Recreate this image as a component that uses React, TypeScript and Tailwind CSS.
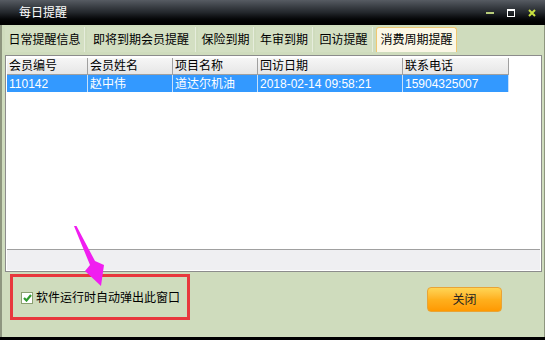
const TABS = [
  { label: "日常提醒信息", w: "w-[80px]" },
  { label: "即将到期会员提醒", w: "w-[109px]" },
  { label: "保险到期", w: "w-[56px]" },
  { label: "年审到期", w: "w-[57px]" },
  { label: "回访提醒", w: "w-[58px]" },
  { label: "消费周期提醒", w: "w-[81px]", active: true },
];

const COLS = [
  { label: "会员编号", w: "w-[81px]" },
  { label: "会员姓名", w: "w-[85px]" },
  { label: "项目名称", w: "w-[85px]" },
  { label: "回访日期", w: "w-[145px]" },
  { label: "联系电话", w: "w-[106px]" },
];

const ROWS = [["110142", "赵中伟", "道达尔机油", "2018-02-14 09:58:21", "15904325007"]];

export default function App() {
  return (
    <div
      className="relative w-[545px] h-[340px] overflow-hidden flex flex-col text-[12px] text-black bg-[#cfdcbd]"
      style={{ fontFamily: '"Liberation Sans", "Noto Sans CJK SC", sans-serif' }}
    >
      {/* title bar */}
      <div className="h-[25px] shrink-0 flex items-center justify-between pl-[19px] pr-[9px] bg-gradient-to-b from-[#575c63] via-[#23272c] to-[#000000]">
        <span className="text-white text-[12px] leading-none">每日提醒</span>
        <div className="flex items-center gap-[13px]">
          <div className="w-[8px] h-[2px] bg-[#b8cc7a]" />
          <div className="w-[8px] h-[8px] border border-white border-t-2" />
          <svg width="8" height="8" viewBox="0 0 8 8">
            <path d="M1 1 L7 7 M7 1 L1 7" stroke="#c8e040" strokeWidth="2" />
          </svg>
        </div>
      </div>

      {/* body */}
      <div className="flex-1 flex flex-col border-l-2 border-l-[#8e967f] border-r border-r-[#8e967f]">
        {/* tabs */}
        <div className="h-[25px] mt-[2px] ml-[3px] flex gap-[2px]">
          {TABS.map((t) => (
            <div
              key={t.label}
              className={`${t.w} h-full flex items-center justify-center ${
                t.active
                  ? "bg-[#fbf7e6] border border-b-0 border-[#f0c870] rounded-t-[3px] ml-[1px]"
                  : "bg-[#d3dfc2] border-r border-r-[#e6eddc]"
              }`}
            >
              {t.label}
            </div>
          ))}
        </div>

        {/* grid */}
        <div className="mt-[3px] ml-[3px] mr-[2px] h-[217px] border border-[#8c8c8c] bg-white flex flex-col p-px">
          <div className="flex-1 flex flex-col">
            <div className="flex h-[17px] mt-px">
              {COLS.map((c) => (
                <div
                  key={c.label}
                  className={`${c.w} h-full flex items-center pl-[2px] border-r border-b border-[#a0a0a0] bg-gradient-to-b from-[#f6f6f6] to-[#e6e6e6]`}
                >
                  {c.label}
                </div>
              ))}
            </div>
            {ROWS.map((r) => (
              <div key={r[0]} className="flex h-[17px]">
                {r.map((v, i) => (
                  <div
                    key={i}
                    className={`${COLS[i].w} h-full flex items-center pl-[2px] bg-[#3399ff] text-white border-r border-[#c7e0fa]`}
                  >
                    {v}
                  </div>
                ))}
              </div>
            ))}
          </div>
          <div className="h-[21px] border-t border-[#a0a0a0] bg-[#efeff2]" />
        </div>

        {/* bottom */}
        <div className="flex-1 flex items-start justify-between">
          <div className="mt-[2px] ml-[8px] w-[180px] h-[46px] border-[3px] border-[#e8383d] flex items-center pl-[8px] pt-[1px]">
            <div className="w-[12px] h-[12px] border border-[#8aa070] bg-white flex items-center justify-center">
              <svg width="9" height="8" viewBox="0 0 9 8">
                <path d="M1 4 L3.5 6.5 L8 1" stroke="#2f9a2f" strokeWidth="2.2" fill="none" />
              </svg>
            </div>
            <span className="ml-[3px]">软件运行时自动弹出此窗口</span>
          </div>
          <button className="mt-[15px] mr-[42px] w-[75px] h-[25px] rounded-[4px] border border-[#e8a436] bg-gradient-to-b from-[#ffd553] via-[#ffb01c] to-[#ff9900] text-[#222] text-[12px] flex items-center justify-center">
            关闭
          </button>
        </div>
      </div>
      <div className="h-[3px] bg-black shrink-0" />

      {/* annotation arrow */}
      <svg className="absolute left-0 top-0 pointer-events-none" width="545" height="340">
        <polygon
          points="74,226 76.5,226 95,261 104,265 101,286 85,271 90,265"
          fill="#f01ef0"
        />
      </svg>
    </div>
  );
}
